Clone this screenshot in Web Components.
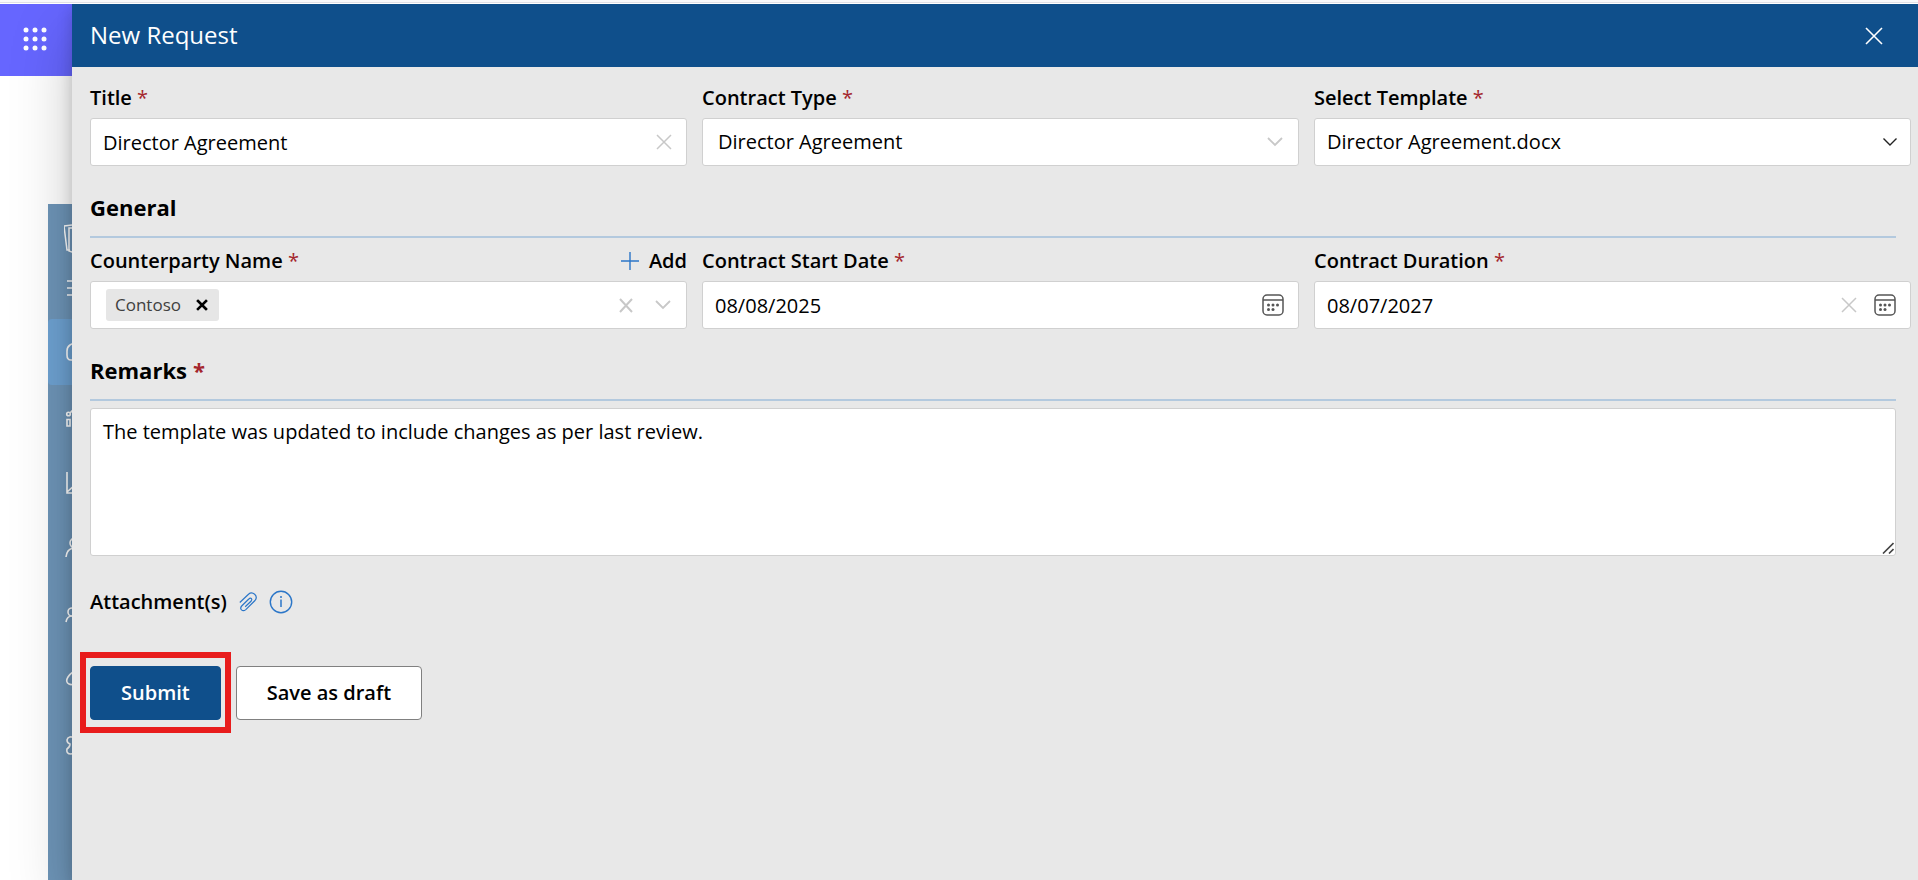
<!DOCTYPE html>
<html lang="en">
<head>
<meta charset="utf-8">
<title>New Request</title>
<style>
  html, body { height: 100%; }
  body {
    margin: 0;
    color: #000;
    background: #fff;
    font: 20px/28px "Open Sans", "Noto Sans", sans-serif;
  }
</style>
</head>
<body>
<app-shell>
  <side-rail slot="rail"></side-rail>
  <request-panel heading="New Request">
    <field-row>
      <form-field kind="text" label="Title" value="Director Agreement"></form-field>
      <form-field kind="select" label="Contract Type" value="Director Agreement"></form-field>
      <form-field kind="select" dark label="Select Template" value="Director Agreement.docx"></form-field>
    </field-row>
    <section-heading>General</section-heading>
    <field-row>
      <form-field kind="tags" label="Counterparty Name" value="Contoso">
        <add-button slot="action">Add</add-button>
      </form-field>
      <form-field kind="date" label="Contract Start Date" value="08/08/2025"></form-field>
      <form-field kind="date" clearable label="Contract Duration" value="08/07/2027"></form-field>
    </field-row>
    <remarks-box label="Remarks" value="The template was updated to include changes as per last review."></remarks-box>
    <attachment-bar></attachment-bar>
    <form-actions></form-actions>
  </request-panel>
</app-shell>

<script>
const svg = (w, h, body, extra = '') =>
  `<svg width="${w}" height="${h}" viewBox="0 0 ${w} ${h}" fill="none" stroke="currentColor" aria-hidden="true" ${extra}>${body}</svg>`;

const ICONS = {
  close: svg(18, 18, '<path d="M1 1 17 17M17 1 1 17" stroke-width="1.6"/>'),
  clear: svg(16, 16, '<path d="M1 1 15 15M15 1 1 15" stroke-width="1.5"/>'),
  clearBold: svg(14, 16, '<path d="M1 2 13 15M13 2 1 15" stroke-width="2"/>'),
  remove: svg(12, 12, '<path d="M2 2 10 10M10 2 2 10" stroke-width="2.6" stroke-linecap="square"/>'),
  chevron: svg(16, 10, '<path d="M1 1 8 8 15 1" stroke-width="1.8"/>'),
  chevronThin: svg(14, 8, '<path d="M.5 .5 7 7 13.5 .5" stroke-width="1.4"/>'),
  plus: svg(18, 18, '<path d="M9 0V18M0 9H18" stroke-width="1.4"/>'),
  calendar: svg(22, 22, '<rect x="1" y="1" width="20" height="20" rx="4" stroke-width="1.5"/><path d="M1 6H21" stroke-width="1.5"/><g fill="currentColor" stroke="none"><circle cx="6.5" cy="11" r="1.5"/><circle cx="11" cy="11" r="1.5"/><circle cx="15.5" cy="11" r="1.5"/><circle cx="6.5" cy="15.5" r="1.5"/><circle cx="11" cy="15.5" r="1.5"/></g>'),
  clip: svg(18, 20, '<path d="M.8 10.5 9.5 2.2C13.5 -1.3 19.7 3.8 16 8.5L6.8 17.6C3.4 20.4 .2 16.8 2.7 14L9.8 7" stroke-width="1.2"/><path d="M9.8 7C11.8 5.2 13.8 7 12.2 9L6.2 14.8" stroke-width="1.2"/>'),
  info: svg(24, 24, '<circle cx="12" cy="12" r="10.7" stroke-width="1.4"/><path d="M12 9.5V17" stroke-width="1.5"/><circle cx="12" cy="7" r="1" fill="currentColor" stroke="none"/>'),
  waffle: svg(24, 24, [3, 12, 21].map(y => [3, 12, 21].map(x => `<circle cx="${x}" cy="${y}" r="2.5"/>`).join('')).join(''), 'style="fill:#fff;stroke:none"'),
  grip: svg(12, 12, '<path d="M1 11.5 11.5 1M7 11.5 11.5 7" stroke-width="1.6"/>'),
};

const define = (name, css, markup) => customElements.define(name, class extends HTMLElement {
  connectedCallback() {
    if (this.shadowRoot) return;
    const root = this.attachShadow({ mode: 'open' });
    const html = typeof markup === 'function' ? markup(this) : markup;
    root.innerHTML = `<style>*{box-sizing:border-box}button{font:inherit;color:inherit;background:none;border:0;padding:0;margin:0;cursor:pointer}svg{display:block;flex:none}${css}</style>${html}`;
  }
});

define('app-shell', `
  :host { display: flex; flex-direction: column; min-height: 100vh; overflow: hidden; }
  .edge { height: 4px; background: linear-gradient(#f8f8fa 2px, #e0e0e6 2px, #e0e0e6 3px, #fff 3px); position: relative; z-index: 2; }
  .body { flex: 1; display: grid; grid-template-columns: 72px minmax(0, 1fr); }
`, `<div class="edge"></div><div class="body"><slot name="rail"></slot><slot></slot></div>`);

define('side-rail', `
  :host { display: flex; flex-direction: column; overflow: hidden; }
  .launcher { width: 72px; height: 72px; background: #6666ff; display: grid; place-items: center; padding: 0 2px 2px 0; }
  nav { flex: 1; margin: 128px 0 0 48px; background: #6e95b8; color: #fff; display: flex; flex-direction: column; }
  .brand { height: 115px; padding: 20px 0 0 16px; display: flex; flex-direction: column; gap: 26px; }
  a { display: flex; align-items: center; height: 66px; padding-left: 18px; color: inherit; }
  a.on { background: #6ea2d2; border-radius: 4px 0 0 4px; }
`, `
  <button class="launcher" aria-label="App launcher">${ICONS.waffle}</button>
  <nav aria-label="Main">
    <div class="brand">
      ${svg(24, 30, '<path d="M0 2 8 1M0 2 3 26H6M5 4H20V28H8L5 27Z" stroke-width="1.5"/>')}
      ${svg(22, 16, '<path d="M3 1H22M3 8H22M3 15H22" stroke-width="1.5"/>')}
    </div>
    ${[
      ['Home', '<path d="M11 0 4 4Q1 6 1 10V14Q1 19 5 19H18V9Z"/>'],
      ['Approvals', '<circle cx="2.5" cy="7" r="1.8"/><path d="M4 6 8 2M1 12.5H4V19H1ZM8 9H12V19H8Z"/>'],
      ['Reports', '<path d="M1 -1V20H20M1 19 10 11"/>'],
      ['Users', '<circle cx="9" cy="4" r="5"/><path d="M0 18Q1 9 9 9Q16 9 18 18"/>'],
      ['Groups', '<circle cx="6" cy="7" r="4"/><path d="M0 17Q1 11 6 11Q11 11 12 17"/>'],
      ['Links', '<path d="M10 0Q5 1 2 6Q-1 11 3 13Q7 15 10 10"/>'],
      ['Settings', '<path d="M10 1Q2 -2 1 3Q1 6 4 7Q4 10 1 12Q0 17 5 17L10 16"/>'],
    ].map(([n, p], i) => `<a href="#" aria-label="${n}" ${i ? '' : 'class="on"'}>${svg(22, 22, p, 'stroke-width="1.6" overflow="visible"')}</a>`).join('')}
  </nav>`);

define('request-panel', `
  :host { display: flex; flex-direction: column; position: relative; z-index: 1; background: #e8e8e8;
    box-shadow: 0 26px 58px rgba(0,0,0,.22), 0 5px 14px rgba(0,0,0,.18); }
  header { height: 63px; padding: 0 35px 0 18px; background: #0f4f8b; color: #fff; display: flex; align-items: center; justify-content: space-between; }
  h1 { margin: 0; padding-bottom: 2px; font-size: 24px; line-height: 32px; font-weight: 400; }
  form { padding: 8px 7px 0 18px; }
`, el => `<header><h1>${el.getAttribute('heading')}</h1><button aria-label="Close">${ICONS.close}</button></header><form><slot></slot></form>`);

define('field-row', `:host { display: grid; grid-template-columns: repeat(3, minmax(0, 1fr)); gap: 15px; }`, `<slot></slot>`);

const HEADING_CSS = `
  h2 { display: flex; gap: 6px; margin: 0 15px 0 0; padding: 26px 0 14px; border-bottom: 2px solid #b3c9de; font-size: 22px; line-height: 30px; font-weight: 700; }
  .req { color: #a4262c; }`;

define('section-heading', `:host { display: block; } ${HEADING_CSS}`, `<h2><slot></slot></h2>`);

const CONTROLS = {
  text: v => `<input id="c" type="text" value="${v}"><button type="button" class="pale" aria-label="Clear">${ICONS.clear}</button>`,
  select: (v, el) => `<select id="c"><option>${v}</option></select><span class="${el.hasAttribute('dark') ? 'dark' : 'pale'}">${el.hasAttribute('dark') ? ICONS.chevronThin : ICONS.chevron}</span>`,
  tags: v => `<span class="chip">${v}<button type="button" aria-label="Remove ${v}">${ICONS.remove}</button></span><input id="c" type="text"><button type="button" class="pale" aria-label="Clear">${ICONS.clearBold}</button><button type="button" class="pale" aria-label="Open list">${ICONS.chevron}</button>`,
  date: (v, el) => `<input id="c" type="text" value="${v}">${el.hasAttribute('clearable') ? `<button type="button" class="pale" aria-label="Clear">${ICONS.clear}</button>` : ''}<button type="button" class="cal" aria-label="Pick a date">${ICONS.calendar}</button>`,
};

define('form-field', `
  :host { display: block; }
  .top { display: flex; justify-content: space-between; height: 43px; padding-top: 9px; }
  label { font-weight: 600; line-height: 28px; }
  .req { color: #a4262c; font-weight: 400; }
  .box { display: flex; align-items: center; height: 48px; padding: 0 14px 0 12px; background: #fff; border: 1px solid #d0d0d0; border-radius: 3px; }
  .box.select { display: grid; grid-template-columns: minmax(0, 1fr); padding: 0; }
  .box.select > * { grid-area: 1 / 1; }
  .box.select span { justify-self: end; margin-right: 15px; pointer-events: none; }
  .box.select span.dark { margin-right: 13px; }
  .box.tags { gap: 22px; padding-left: 15px; padding-right: 15px; }
  .box.date { gap: 17px; }
  input, select { flex: 1; min-width: 0; width: 100%; height: 46px; margin: 0; padding: 0; border: 0; outline: 0; background: none; font: inherit; color: #000; }
  select { appearance: none; padding: 0 40px 0 15px; }
  :host([dark]) select { padding-left: 12px; }
  .pale { color: #c8c8c8; }
  .dark { color: #222; }
  .cal { color: #555; }
  .chip { display: flex; align-items: center; gap: 15px; height: 32px; padding: 0 11px 0 9px; background: #e6e6e6; border-radius: 3px; font-size: 17px; line-height: 24px; color: #404040; }
  .chip button { color: #000; }
`, el => {
  const kind = el.getAttribute('kind');
  return `<div class="top"><label for="c">${el.getAttribute('label')} <span class="req">*</span></label><slot name="action"></slot></div><div class="box ${kind}">${CONTROLS[kind](el.getAttribute('value'), el)}</div>`;
});

define('add-button', `
  :host { display: block; font-weight: 600; }
  button { display: flex; align-items: center; gap: 10px; height: 28px; line-height: 28px; }
  svg { color: #2b76c8; }
`, `<button type="button">${ICONS.plus}<span><slot></slot></span></button>`);

define('remarks-box', `
  :host { display: block; }
  ${HEADING_CSS}
  .area { position: relative; margin: 7px 15px 0 0; }
  .area svg { position: absolute; right: 2px; bottom: 2px; color: #444; pointer-events: none; }
  textarea { display: block; width: 100%; height: 148px; margin: 0; padding: 9px 12px; border: 1px solid #d0d0d0; border-radius: 3px; outline: 0; background: #fff; color: #000; font: inherit; resize: vertical; }
  textarea::-webkit-resizer { display: none; }
`, el => `<h2><label for="t">${el.getAttribute('label')}</label> <span class="req">*</span></h2><div class="area"><textarea id="t">${el.getAttribute('value')}</textarea>${ICONS.grip}</div>`);

define('attachment-bar', `
  :host { display: flex; align-items: center; height: 28px; margin: 32px 0 50px; font-weight: 600; }
  button { color: #2b76c8; margin-left: 12px; }
`, `<span>Attachment(s)</span><button type="button" aria-label="Attach a file">${ICONS.clip}</button><button type="button" aria-label="About attachments">${ICONS.info}</button>`);

define('form-actions', `
  :host { display: flex; gap: 15px; padding-bottom: 24px; }
  .key { position: relative; }
  .key::after { content: ""; position: absolute; inset: -14px -10px -13px; border: 6px solid #e81c1c; pointer-events: none; }
  button { height: 54px; padding: 0 30px; border: 1px solid #808080; border-radius: 4px; background: #fff; font-weight: 600; }
  .primary { background: #0f4f8b; border-color: #0f4f8b; color: #fff; }
`, `<div class="key"><button type="submit" class="primary">Submit</button></div><button type="button">Save as draft</button>`);
</script>
</body>
</html>
